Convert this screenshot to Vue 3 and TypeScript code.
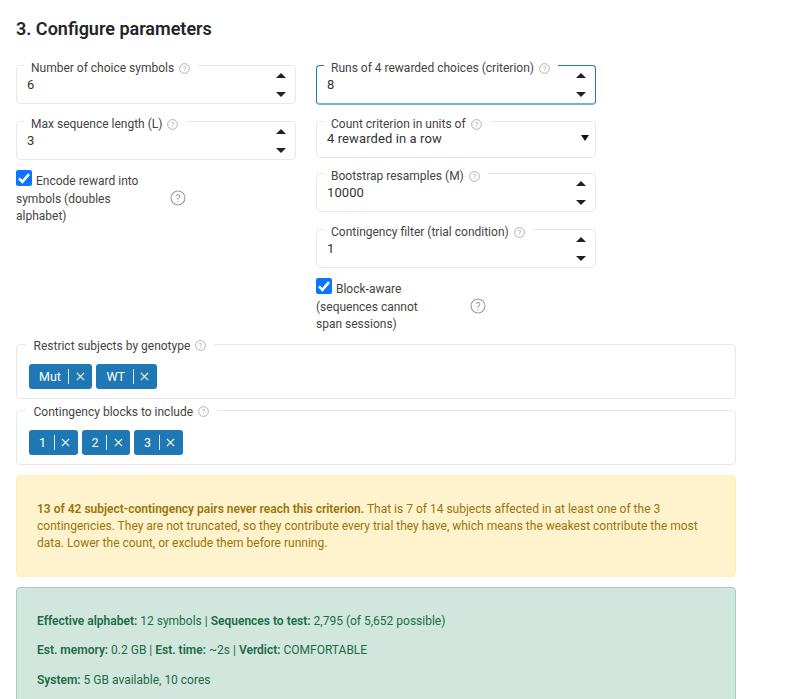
<script setup lang="ts">
interface Field { label: string; value: string; kind: 'num' | 'sel'; focus?: boolean }
const left: Field[] = [
  { label: 'Number of choice symbols', value: '6', kind: 'num' },
  { label: 'Max sequence length (L)', value: '3', kind: 'num' },
]
const right: Field[] = [
  { label: 'Runs of 4 rewarded choices (criterion)', value: '8', kind: 'num', focus: true },
  { label: 'Count criterion in units of', value: '4 rewarded in a row', kind: 'sel' },
  { label: 'Bootstrap resamples (M)', value: '10000', kind: 'num' },
  { label: 'Contingency filter (trial condition)', value: '1', kind: 'num' },
]
</script>

<template>
  <main class="page">
    <h2 class="title">3. Configure parameters</h2>
    <div class="cols">
      <div class="col">
        <div v-for="f in left" :key="f.label" class="field">
          <span class="label">{{ f.label }}
            <svg class="q" viewBox="0 0 12 12"><circle cx="6" cy="6" r="5.3" /><text x="6" y="8.7">?</text></svg>
          </span>
          <span class="value">{{ f.value }}</span>
          <span class="spin"><i class="up"></i><i class="down"></i></span>
        </div>
        <div class="check">
          <div class="check-text">
            <span class="box"><svg viewBox="0 0 16 16"><path d="M3 8.4l3.4 3.4 6.6-7.6" /></svg></span>
            Encode reward into symbols (doubles alphabet)
          </div>
          <svg class="q big" viewBox="0 0 16 16"><circle cx="8" cy="8" r="7" /><text x="8" y="11.5">?</text></svg>
        </div>
      </div>
      <div class="col">
        <div v-for="f in right" :key="f.label" class="field" :class="{ focus: f.focus, sel: f.kind === 'sel' }">
          <span class="label">{{ f.label }}
            <svg class="q" viewBox="0 0 12 12"><circle cx="6" cy="6" r="5.3" /><text x="6" y="8.7">?</text></svg>
          </span>
          <span class="value">{{ f.value }}</span>
          <span v-if="f.kind === 'num'" class="spin"><i class="up"></i><i class="down"></i></span>
          <i v-else class="caret"></i>
        </div>
        <div class="check narrow">
          <div class="check-text">
            <span class="box"><svg viewBox="0 0 16 16"><path d="M3 8.4l3.4 3.4 6.6-7.6" /></svg></span>
            Block-aware (sequences cannot span sessions)
          </div>
          <svg class="q big" viewBox="0 0 16 16"><circle cx="8" cy="8" r="7" /><text x="8" y="11.5">?</text></svg>
        </div>
      </div>
    </div>

    <div class="multi first">
      <span class="label">Restrict subjects by genotype
        <svg class="q" viewBox="0 0 12 12"><circle cx="6" cy="6" r="5.3" /><text x="6" y="8.7">?</text></svg>
      </span>
      <span v-for="t in ['Mut', 'WT']" :key="t" class="tag"><b>{{ t }}</b><svg viewBox="0 0 10 10"><path d="M1 1l8 8M9 1l-8 8" /></svg></span>
    </div>
    <div class="multi">
      <span class="label">Contingency blocks to include
        <svg class="q" viewBox="0 0 12 12"><circle cx="6" cy="6" r="5.3" /><text x="6" y="8.7">?</text></svg>
      </span>
      <span v-for="t in ['1', '2', '3']" :key="t" class="tag"><b>{{ t }}</b><svg viewBox="0 0 10 10"><path d="M1 1l8 8M9 1l-8 8" /></svg></span>
    </div>

    <div class="alert warn">
      <p><strong>13 of 42 subject-contingency pairs never reach this criterion.</strong> That is 7 of 14 subjects affected in at least one of the 3 contingencies. They are not truncated, so they contribute every trial they have, which means the weakest contribute the most data. Lower the count, or exclude them before running.</p>
    </div>
    <div class="alert ok">
      <p><strong>Effective alphabet:</strong> 12 symbols | <strong>Sequences to test:</strong> 2,795 (of 5,652 possible)</p>
      <p><strong>Est. memory:</strong> 0.2 GB | <strong>Est. time:</strong> ~2s | <strong>Verdict:</strong> COMFORTABLE</p>
      <p><strong>System:</strong> 5 GB available, 10 cores</p>
    </div>
  </main>
</template>

<style>
html, body { margin: 0; background: #fff; overflow: hidden; }
</style>

<style scoped>
.page {
  width: 720px;
  height: 699px;
  overflow: hidden;
  padding: 0 50px 0 16px;
  font-family: Roboto, "Liberation Sans", sans-serif;
  font-size: 12.5px;
  color: #212529;
}
.title { margin: 0; padding-top: 18px; font-size: 18px; line-height: 22px; font-weight: 600; }
.cols { display: flex; gap: 20px; margin-top: 25px; }
.col { width: 280px; display: flex; flex-direction: column; gap: 17px; }
.field {
  position: relative;
  box-sizing: border-box;
  height: 39px;
  border: 1px solid #e8e8e8;
  border-radius: 4px;
  padding: 11px 10px 0 10px;
  font-size: 13px;
  line-height: 16px;
  color: #333;
}
.field.sel { height: 37px; margin-bottom: -2px; padding-top: 9px; }
.field.focus { border-color: #1f77b4; border-bottom: 2px solid #6fb0dc; height: 40px; margin-bottom: -1px; }
.field .value { letter-spacing: 0.1px; }
.label {
  position: absolute;
  top: -5px;
  left: 7px;
  padding: 0 8px 0 7px;
  background: #fff;
  font-size: 12px;
  line-height: 14px;
  color: #444;
  display: flex;
  align-items: center;
  gap: 5px;
  white-space: nowrap;
}
.q { width: 11px; height: 11px; flex: none; }
.q circle { fill: none; stroke: #a9a9a9; stroke-width: 1; }
.q text { fill: #a9a9a9; font-size: 8px; text-anchor: middle; font-family: Roboto, sans-serif; }
.q.big { width: 16px; height: 16px; }
.q.big circle { stroke-width: 1.1; stroke: #999; }
.q.big text { fill: #999; font-size: 10.5px; }
.spin { position: absolute; right: 9px; top: 7px; display: flex; flex-direction: column; gap: 14px; }
.up, .down, .caret { display: block; width: 0; height: 0; border-left: 5px solid transparent; border-right: 5px solid transparent; }
.up { border-bottom: 5px solid #222; }
.down { border-top: 5px solid #222; }
.caret { position: absolute; right: 6px; top: 13px; border-left-width: 4px; border-right-width: 4px; border-top: 6px solid #111; }
.check { display: flex; align-items: center; justify-content: space-between; margin-top: -7px; width: 170px; color: #444; }
.check-text { width: 127px; line-height: 17.5px; font-size: 12px; }
.box {
  display: inline-flex;
  vertical-align: -1px;
  width: 16px;
  height: 16px;
  margin-right: 1px;
  border-radius: 2px;
  background: #0b75ff;
}
.box svg { width: 16px; height: 16px; fill: none; stroke: #fff; stroke-width: 2.6; }
.multi {
  position: relative;
  box-sizing: border-box;
  width: 720px;
  height: 55px;
  margin-top: 11px;
  border: 1px solid #e8e8e8;
  border-radius: 4px;
  padding: 19px 12px 0;
  display: flex;
  gap: 4px;
  align-items: flex-start;
}
.multi.first { margin-top: 10px; }
.multi .label { top: -6px; left: 9px; padding: 0 8px 0 7.5px; }
.tag {
  height: 25px;
  box-sizing: border-box;
  background: #1f77b4;
  border-radius: 3px;
  color: #fff;
  display: inline-flex;
  align-items: center;
  padding: 0 7.5px 0 10px;
  font-size: 12.5px;
}
.tag b { font-weight: 400; padding-right: 7.5px; border-right: 1px solid #d7e6f2; line-height: 15px; margin-right: 6.5px; }
.tag svg { width: 9px; height: 9px; fill: none; stroke: #fff; stroke-width: 1.3; }
.alert { width: 720px; box-sizing: border-box; border-radius: 4px; border: 1px solid; font-size: 12px; line-height: 17px; padding: 25px 20px; }
.alert p { margin: 0; }
.alert strong { font-weight: 600; }
.warn { margin-top: 10px; height: 102px; background: #fff3cd; border-color: #ffeeba; color: #99750a; }
.ok { margin-top: 10px; height: 130px; background: #d1e7dd; border-color: #a9d0bf; color: #1c6b46; }
.ok p { margin-bottom: 12.5px; }
</style>
